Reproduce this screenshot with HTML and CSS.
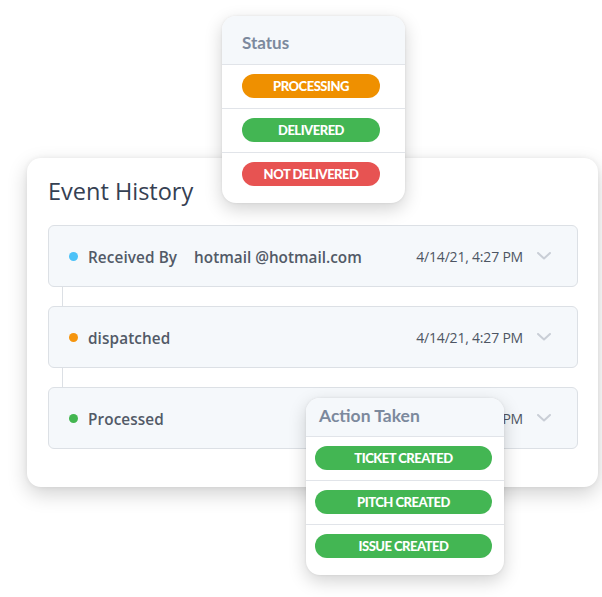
FILE: index.html
```html
<!DOCTYPE html>
<html>
<head>
<meta charset="utf-8">
<link rel="stylesheet" href="styles.css">
</head>
<body>
<div class="stage">
  <div class="card">
    <h1 class="title">Event History</h1>
    <div class="events">
      <div class="event">
        <span class="dot dot-blue"></span>
        <span class="label">Received By</span>
        <span class="email">hotmail @hotmail.com</span>
        <span class="date">4/14/21, 4:27 PM</span>
        <svg class="chev" width="14" height="8" viewBox="0 0 14 8"><path d="M1 1l6 5.5L13 1" fill="none" stroke="#c9ced6" stroke-width="2" stroke-linecap="round" stroke-linejoin="round"/></svg>
      </div>
      <div class="connector"></div>
      <div class="event">
        <span class="dot dot-orange"></span>
        <span class="label">dispatched</span>
        <span class="date">4/14/21, 4:27 PM</span>
        <svg class="chev" width="14" height="8" viewBox="0 0 14 8"><path d="M1 1l6 5.5L13 1" fill="none" stroke="#c9ced6" stroke-width="2" stroke-linecap="round" stroke-linejoin="round"/></svg>
      </div>
      <div class="connector"></div>
      <div class="event">
        <span class="dot dot-green"></span>
        <span class="label">Processed</span>
        <span class="date">4/14/21, 4:27 PM</span>
        <svg class="chev" width="14" height="8" viewBox="0 0 14 8"><path d="M1 1l6 5.5L13 1" fill="none" stroke="#c9ced6" stroke-width="2" stroke-linecap="round" stroke-linejoin="round"/></svg>
      </div>
    </div>
  </div>

  <div class="popup popup-status">
    <div class="popup-head">Status</div>
    <div class="popup-row"><span class="badge b-orange">PROCESSING</span></div>
    <div class="popup-row"><span class="badge b-green">DELIVERED</span></div>
    <div class="popup-row last"><span class="badge b-red">NOT DELIVERED</span></div>
  </div>

  <div class="popup popup-action">
    <div class="popup-head">Action Taken</div>
    <div class="popup-row"><span class="badge b-green">TICKET CREATED</span></div>
    <div class="popup-row"><span class="badge b-green">PITCH CREATED</span></div>
    <div class="popup-row last"><span class="badge b-green">ISSUE CREATED</span></div>
  </div>
</div>
</body>
</html>
```

FILE: styles.css
```css
* { box-sizing: border-box; }
html, body { margin: 0; padding: 0; background: #ffffff; }
body { width: 602px; height: 597px; overflow: hidden; font-family: "Open Sans", "Noto Sans", sans-serif; }

.stage { position: relative; width: 602px; height: 597px; padding-top: 158px; padding-left: 27px; }

.card {
  width: 571px;
  height: 329px;
  background: #fff;
  border-radius: 14px;
  box-shadow: 0 7px 20px rgba(0,0,0,0.18), 0 0 5px rgba(0,0,0,0.06);
  padding: 16px 20px 0 21px;
}

.title {
  margin: 0;
  font-family: "Open Sans", sans-serif;
  font-weight: 400;
  font-size: 23.5px;
  line-height: 34px;
  color: #354052;
  letter-spacing: 0;
}

.events { margin-top: 17px; display: flex; flex-direction: column; }

.event {
  height: 62px;
  background: #f5f8fb;
  border: 1px solid #dce0e5;
  border-radius: 6px;
  display: flex;
  align-items: center;
  padding-left: 20px;
  padding-right: 26px;
  color: #4d5563;
}

.connector { height: 19px; width: 1px; margin-left: 14px; background: #dce0e5; }

.dot { width: 9px; height: 9px; border-radius: 50%; flex: none; }
.dot-blue { background: #4cc2f8; }
.dot-orange { background: #f5950e; }
.dot-green { background: #43b650; }

.label { margin-left: 10px; font-size: 15.3px; font-weight: 600; letter-spacing: 0.1px; color: #525a67; padding-top: 2px; }
.email { margin-left: 17px; font-size: 15.3px; font-weight: 600; color: #525a67; padding-top: 2px; }
.date { margin-left: auto; font-size: 14px; font-weight: 400; color: #4d5563; letter-spacing: -0.2px; }
.chev { margin-left: 14px; flex: none; }

.popup {
  position: absolute;
  background: #fff;
  border-radius: 14px;
  overflow: hidden;
  box-shadow: 0 6px 18px rgba(0,0,0,0.18), 0 0 3px rgba(0,0,0,0.08);
}
.popup-status { left: 222px; top: 16px; width: 183px; height: 187px; }
.popup-action { left: 306px; top: 398px; width: 198px; height: 177px; }

.popup-head {
  background: #f5f8fb;
  font-family: "Lato", sans-serif;
  font-weight: 700;
  font-size: 17px;
  color: #7c899d;
  border-bottom: 1px solid #e1e4e9;
}
.popup-status .popup-head { height: 49px; padding: 17px 0 0 20px; line-height: 20px; }
.popup-action .popup-head { height: 39px; padding: 7px 0 0 13px; line-height: 22px; font-size: 17.5px; }

.popup-row { padding: 9px 0 10px; border-bottom: 1px solid #e1e4e9; }
.popup-row.last { border-bottom: none; }
.popup-status .popup-row { padding-left: 20px; }
.popup-action .popup-row { padding-left: 9px; }

.badge {
  display: flex;
  align-items: center;
  justify-content: center;
  height: 24px;
  border-radius: 12px;
  color: #fff;
  font-family: "Lato", sans-serif;
  font-weight: 900;
  font-size: 13px;
  letter-spacing: -0.5px;
}
.popup-status .badge { width: 138px; }
.popup-action .badge { width: 177px; }
.b-orange { background: #ef9000; }
.b-green { background: #43b653; }
.b-red { background: #e75352; }
```
